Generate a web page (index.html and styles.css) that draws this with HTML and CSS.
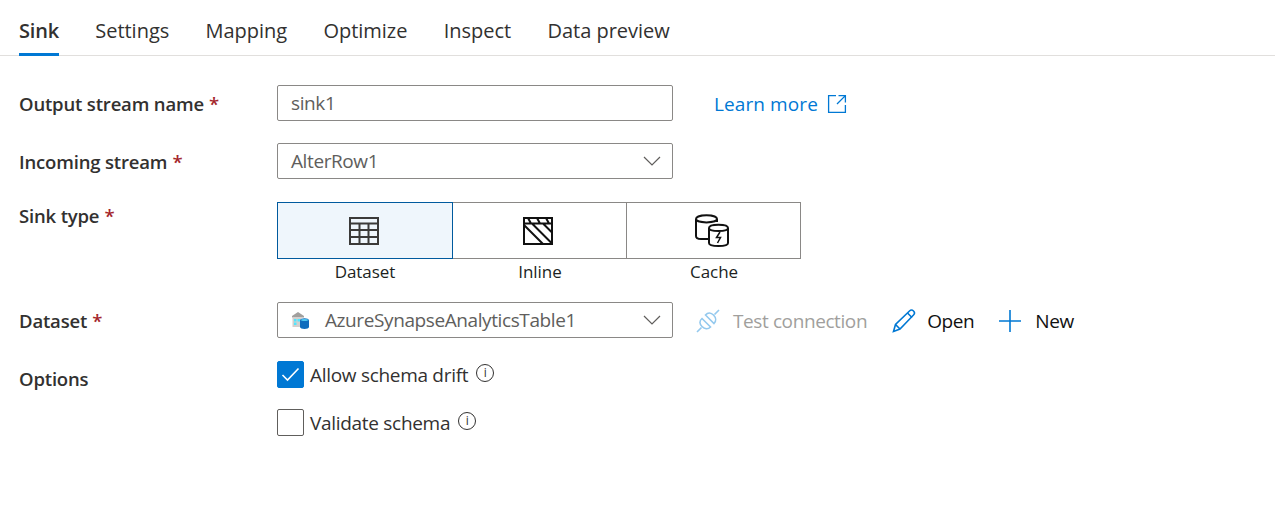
FILE: index.html
```html
<!DOCTYPE html>
<html lang="en">
<head>
    <meta charset="UTF-8">
    <title>Sink</title>
    <link rel="stylesheet" href="styles.css">
</head>
<body>
<!-- tabs -->
<div class="tabs">
    <a class="tab tab-active">Sink</a>
    <a class="tab">Settings</a>
    <a class="tab">Mapping</a>
    <a class="tab">Optimize</a>
    <a class="tab">Inspect</a>
    <a class="tab">Data preview</a>
</div>

<div class="form">
    <div class="row row-name">
        <div class="label">Output stream name <span class="req">*</span></div>
        <div class="controls">
            <div class="field">sink1</div>
            <a class="learn">Learn more
                <svg width="20" height="20" viewBox="0 0 20 20" fill="none" stroke="#0078d4" stroke-width="1.3">
                    <path d="M9 1.6H1.6v16.8h16.8V11"/>
                    <path d="M11.5 1.6h6.9v6.9M18.4 1.6L10 10"/>
                </svg>
            </a>
        </div>
    </div>

    <div class="row row-incoming">
        <div class="label">Incoming stream <span class="req">*</span></div>
        <div class="controls">
            <div class="field field-select">AlterRow1
                <svg class="chev" width="18" height="10" viewBox="0 0 18 10" fill="none" stroke="#605e5c" stroke-width="1.2"><path d="M1 1l8 8 8-8"/></svg>
            </div>
        </div>
    </div>

    <div class="row row-type">
        <div class="label">Sink type <span class="req">*</span></div>
        <div class="types">
            <div class="type">
                <div class="type-box type-on">
                    <svg width="30" height="28" viewBox="0 0 30 28" fill="none" stroke="#3b3a39" stroke-width="2">
                        <rect x="1" y="1" width="28" height="26"/>
                        <path d="M1 6.500h28M1 13h28M1 20h28M10.500 6.500V27M19.500 6.500V27"/>
                    </svg>
                </div>
                <div class="type-name">Dataset</div>
            </div>
            <div class="type">
                <div class="type-box">
                    <svg width="30" height="28" viewBox="0 0 30 28" fill="none" stroke="#111" stroke-width="2">
                        <rect x="1" y="1" width="28" height="26"/>
                        <path d="M1 6.500h28M5 1l3 5.500M14 1l3 5.500M23 1l3 5.500M1 8l19 19M9 6.500l20 20M20 6.500l9 9"/>
                    </svg>
                </div>
                <div class="type-name">Inline</div>
            </div>
            <div class="type">
                <div class="type-box">
                    <svg width="34" height="33" viewBox="0 0 34 33" fill="none" stroke="#111" stroke-width="2">
                        <path d="M13 25H6c-3 0-5-1-5-3V5c0-5 21-5 21 0v3"/>
                        <path d="M1 5c0 4.500 21 4.500 21 0"/>
                        <path d="M14 14v15c0 4 19 4 19 0V14c0-4.500-19-4.500-19 0c0 4 19 4 19 0"/>
                        <path d="M25 18l-3.500 5.500h4L22.500 29" stroke-width="1.500"/>
                    </svg>
                </div>
                <div class="type-name">Cache</div>
            </div>
        </div>
    </div>

    <div class="row row-dataset">
        <div class="label">Dataset <span class="req">*</span></div>
        <div class="controls">
            <div class="field field-select field-dataset">
                <svg class="ds-icon" width="19" height="18" viewBox="0 0 19 18">
                    <path d="M1 5l6-4 6 4v1.500H1z" fill="#a19f9d"/>
                    <rect x="1.500" y="6" width="9" height="10" fill="#d2d0ce"/>
                    <rect x="3" y="8" width="2.500" height="2.500" fill="#50e6ff"/>
                    <rect x="6.500" y="8" width="2.500" height="2.500" fill="#50e6ff"/>
                    <rect x="3" y="11.500" width="2.500" height="2.500" fill="#50e6ff"/>
                    <path d="M9 9.500c0-3 9-3 9 0V16c0 2.500-9 2.500-9 0z" fill="#0f6cbd"/>
                    <ellipse cx="13.500" cy="9" rx="3.500" ry="1" fill="#50c8f0"/>
                </svg>
                AzureSynapseAnalyticsTable1
                <svg class="chev" width="18" height="10" viewBox="0 0 18 10" fill="none" stroke="#605e5c" stroke-width="1.2"><path d="M1 1l8 8 8-8"/></svg>
            </div>
            <div class="actions">
                <a class="action action-off">
                    <svg width="24" height="24" viewBox="0 0 24 24" fill="none" stroke="#94c9ee" stroke-width="1.600">
                        <path d="M1 23l4.500-4.500M23 1l-4.500 4.500"/>
                        <path d="M6 9.500l8.500 8.500c-2.500 2.500-6 2-8.500-.5s-3-5.500 0-8z"/>
                        <path d="M9.500 6l8.500 8.500c2.500-2.500 2-6-.5-8.500s-5.500-3-8 0z"/>
                    </svg>
                    Test connection
                </a>
                <a class="action">
                    <svg class="icon-open" width="24" height="24" viewBox="0 0 24 24" fill="none" stroke="#0078d4" stroke-width="1.600">
                        <path d="M1.500 22.500l2-7L17.500 2c1.500-1.500 3-1 4 0s1.500 2.500 0 4L8 20z"/>
                        <path d="M3.500 15.500L8 20M15.500 4l4.500 4.500"/>
                    </svg>
                    Open
                </a>
                <a class="action">
                    <svg class="icon-new" width="24" height="24" viewBox="0 0 24 24" fill="none" stroke="#0078d4" stroke-width="1.600">
                        <path d="M12 1v22M1 12h22"/>
                    </svg>
                    New
                </a>
            </div>
        </div>
    </div>

    <div class="row row-options">
        <div class="label label-options">Options</div>
        <div class="checks">
            <div class="check">
                <span class="box box-on">
                    <svg width="19" height="15" viewBox="0 0 19 15" fill="none" stroke="#fff" stroke-width="1.600"><path d="M1.500 8l5 5L17.500 1.500"/></svg>
                </span>
                Allow schema drift
                <span class="info">i</span>
            </div>
            <div class="check">
                <span class="box"></span>
                Validate schema
                <span class="info">i</span>
            </div>
        </div>
    </div>
</div>
</body>
</html>
```

FILE: styles.css
```css
* {
    margin: 0;
    padding: 0;
    box-sizing: border-box;
}

body {
    font-family: "Open Sans", "Noto Sans", sans-serif;
    font-size: 19px;
    color: #323130;
    background-color: white;
}

/* tabs */
.tabs {
    display: flex;
    gap: 36.3px;
    height: 56px;
    padding-left: 19px;
    border-bottom: 1px solid #e1dfdd;
}

.tab {
    height: 56px;
    line-height: 62px;
    font-size: 20px;
    letter-spacing: -0.02px;
}

.tab-active {
    font-weight: 600;
    letter-spacing: -0.2px;
    border-bottom: 3px solid #0078d4;
}

/* form */
.form {
    padding: 29px 0 0 19px;
}

.row {
    display: grid;
    grid-template-columns: 258px 1fr;
}

.row-incoming {
    margin-top: 22px;
}

.row-type {
    margin-top: 23px;
}

.row-dataset {
    margin-top: 17px;
}

.row-options {
    margin-top: 23px;
}

.label {
    font-size: 18.5px;
    font-weight: 600;
    line-height: 37px;
    height: 36px;
    letter-spacing: -0.17px;
}

.row-type .label {
    line-height: 28px;
}

.label-options {
    line-height: 36px;
}

.req {
    margin-left: 0.5px;
    color: #a4262c;
}

.controls {
    display: flex;
    align-items: center;
}

.field {
    position: relative;
    width: 396px;
    height: 36px;
    padding-left: 13px;
    border: 1px solid #8a8886;
    border-radius: 2px;
    line-height: 34px;
    color: #605e5c;
    font-size: 19px;
    letter-spacing: -0.4px;
    flex-shrink: 0;
}

.chev {
    position: absolute;
    right: 11px;
    top: 12px;
}

.field-dataset {
    display: flex;
    align-items: center;
    gap: 15px;
}

.learn {
    display: flex;
    align-items: center;
    gap: 9px;
    margin-left: 41px;
    padding-top: 2px;
    color: #0078d4;
    letter-spacing: 0.1px;
}

/* sink type */
.types {
    display: flex;
}

.type {
    width: 174px;
}

.type:first-child {
    width: 176px;
}

.type-box {
    display: flex;
    align-items: center;
    justify-content: center;
    height: 57px;
    padding-right: 4px;
    border: 1px solid #8a8886;
    margin-left: -1px;
}

.type:first-child .type-box {
    margin-left: 0;
}

.type-on {
    padding-right: 2px;
    background-color: #eff6fc;
    border-color: #005a9e;
    position: relative;
}

.type-name {
    height: 26px;
    line-height: 26px;
    text-align: center;
    font-size: 17px;
    letter-spacing: -0.05px;
    color: #201f1e;
}

/* actions */
.actions {
    display: flex;
    align-items: center;
    gap: 24px;
    margin-left: 23px;
    padding-top: 2px;
}

.action {
    display: flex;
    align-items: center;
    gap: 12px;
    color: #111;
    letter-spacing: -0.4px;
}

.action-off {
    gap: 13px;
    color: #a19f9d;
}

.icon-open {
    margin: 0 -1px 0 1px;
}

.icon-new {
    margin-right: 1px;
}

/* options */
.checks {
    display: flex;
    flex-direction: column;
    gap: 21px;
}

.check {
    display: flex;
    align-items: center;
    gap: 6px;
    height: 27px;
    color: #323130;
    letter-spacing: -0.3px;
}

.box {
    display: flex;
    align-items: center;
    justify-content: center;
    width: 27px;
    height: 27px;
    border: 1px solid #605e5c;
    border-radius: 2px;
}

.box-on {
    background-color: #0078d4;
    border-color: #0078d4;
}

.info {
    display: inline-block;
    width: 18px;
    height: 18px;
    margin: -3px 0 0 2px;
    border: 1px solid #323130;
    border-radius: 50%;
    font-size: 12px;
    line-height: 16px;
    text-align: center;
    letter-spacing: 0;
}
```
